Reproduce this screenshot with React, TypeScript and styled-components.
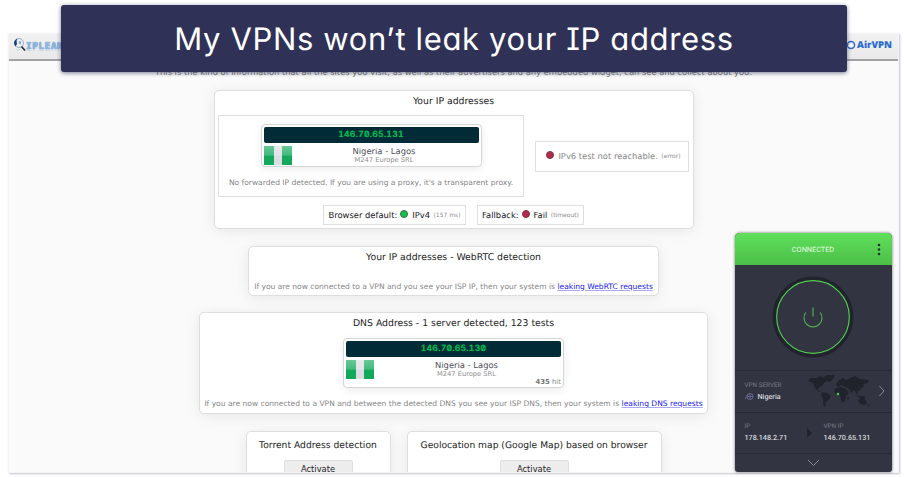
import React from 'react';
import styled, { createGlobalStyle, css } from 'styled-components';

const Global = createGlobalStyle`
  * { box-sizing: border-box; }
  body { margin: 0; background: #fff; text-rendering: geometricPrecision; }
`;

const Page = styled.div`
  position: relative;
  width: 908px;
  height: 477px;
  padding: 34px 0 0 9px;
  overflow: hidden;
  font-family: 'DejaVu Sans', Verdana, sans-serif;
  white-space: nowrap;
`;

const Browser = styled.main`
  width: 889px;
  height: 438px;
  overflow: hidden;
  background: #fafafa;
  box-shadow: 0 0 0 1px #f4f4f7, 1px 1px 2px 1px #c3c4d3;
`;

const SiteBar = styled.header`
  display: flex;
  justify-content: space-between;
  align-items: center;
  height: 27px;
  padding: 0 6px 4px 4px;
  background: linear-gradient(#f1f1f1, #e9e9e9);
  border-bottom: 2px solid #a2a2a2;
`;

const Brand = styled.div`
  display: flex;
  align-items: center;
  gap: 1px;
`;

const LeakName = styled.span`
  margin: 5px 0 0 -1px;
  font: bold 9.5px/12px 'DejaVu Sans Mono', monospace;
  letter-spacing: 0.5px;
  color: #8db8e3;
  text-shadow: 0 0 1px #4f7fb5, 0 2px 1px #c9d6e6;
`;

const AirName = styled.span`
  font: 800 9.5px/14px 'Open Sans', sans-serif;
  color: #2b6bce;
`;

const Intro = styled.p`
  height: 18px;
  margin: 0 0 11px;
  padding-top: 4px;
  font-size: 8.33px;
  line-height: 14px;
  text-align: center;
  color: #777;
`;

const Column = styled.section`
  display: flex;
  flex-direction: column;
  align-items: center;
  gap: 16.5px;
`;

const Card = styled.article<{ $w: number; $h: number; $top?: number }>`
  display: flex;
  flex-direction: column;
  align-items: center;
  flex: none;
  width: ${(p) => p.$w}px;
  height: ${(p) => p.$h}px;
  padding: ${(p) => p.$top ?? 3}px 3px 3px;
  background: #fff;
  border: 1px solid #dedede;
  border-radius: 5px;
  box-shadow: 0 2px 14px rgba(0, 0, 0, 0.08);
`;

const Title = styled.h2<{ $size?: number }>`
  margin: 0;
  font-size: ${(p) => p.$size ?? 9.3}px;
  line-height: 14px;
  font-weight: normal;
  color: #1d1d24;
`;

const Results = styled.div`
  display: flex;
  align-items: center;
  gap: 11px;
  margin-top: 6px;
`;

const Outlined = styled.div`
  display: flex;
  align-items: center;
  justify-content: center;
  border: 1px solid #dfdfdf;
  background: #fff;
`;

const Forwarded = styled(Outlined)`
  flex-direction: column;
  justify-content: flex-start;
  width: 306px;
  height: 82px;
  padding-top: 8px;
  gap: 10px;
`;

const Ipv6 = styled(Outlined)`
  width: 154px;
  height: 31px;
  color: #858585;
`;

const Protocols = styled.div`
  display: flex;
  gap: 11px;
  margin-top: 8px;
`;

const Protocol = styled(Outlined)<{ $w: number }>`
  width: ${(p) => p.$w}px;
  height: 20px;
  color: #15151c;
`;

const Label = styled.span`
  font-size: 8.37px;
  line-height: 12px;
`;

const Detail = styled.span`
  margin: 2px 0 0 3.5px;
  font-size: 6px;
  line-height: 10px;
  color: #8d8d8d;
`;

const Dot = styled.i<{ $ok?: boolean }>`
  width: 8px;
  height: 8px;
  margin: 0 4px 2px 3px;
  border-radius: 50%;
  border: 1px solid ${(p) => (p.$ok ? '#3a6a48' : '#7b3548')};
  background: ${(p) => (p.$ok ? '#12c24a' : '#b52a4c')};
`;

const AddressBox = styled.div<{ $h: number }>`
  flex: none;
  width: 221px;
  height: ${(p) => p.$h}px;
  padding: 2px;
  background: #fff;
  border: 1px solid #d6d6d6;
  border-radius: 4px;
  box-shadow: 0 2px 8px rgba(0, 0, 0, 0.08);
`;

const AddressBar = styled.div`
  height: 16px;
  border-radius: 2px;
  background: #012b36;
  color: #04bd50;
  text-align: center;
  font: 500 8.6px/17px Inter, sans-serif;
  font-feature-settings: 'zero', 'tnum';
  letter-spacing: 0.22px;
  text-shadow: 0 0 1px #04bd50;
`;

const Place = styled.div`
  display: grid;
  grid-template-columns: 28px 1fr;
  column-gap: 1px;
  padding: 3px 0 0;
`;

const Flag = styled.div`
  width: 28px;
  height: 19px;
  background: linear-gradient(rgba(255, 255, 255, 0.36), rgba(255, 255, 255, 0.2) 48%, transparent 54%),
    linear-gradient(90deg, #12a95c 34%, #dcdde2 34% 66%, #12a95c 66%);
`;

const PlaceText = styled.div`
  padding-right: 3px;
  text-align: center;
`;

const City = styled.div`
  font-size: 8.39px;
  line-height: 11px;
  color: #4e4e58;
`;

const Isp = styled.div`
  font-size: 6.7px;
  line-height: 7px;
  color: #8e8e8e;
`;

const Hits = styled.div`
  text-align: right;
  margin-top: -1px;
  font-size: 6.9px;
  line-height: 8px;
  color: #888;
  b { color: #777; }
`;

const Note = styled.p<{ $top?: number }>`
  margin: ${(p) => p.$top ?? 0}px 0 0;
  font-size: 7.56px;
  line-height: 12px;
  color: #858585;
`;

const DnsAddress = styled.div`
  margin-top: 7px;
`;

const Link = styled.a`
  color: #1616ee;
  text-decoration: underline;
  text-decoration-color: #a9a9f4;
  text-underline-offset: 1px;
`;

const Pair = styled.div`
  display: flex;
  gap: 16px;
`;

const Activate = styled.button`
  width: 69px;
  height: 18px;
  margin: 7px 0 0;
  padding: 0;
  border: 1px solid #dedede;
  border-radius: 2px;
  background: #ededed;
  color: #1d1d24;
  font: 8.3px/14px 'DejaVu Sans', sans-serif;
`;

const Banner = styled.h1`
  position: absolute;
  left: 61px;
  top: 5px;
  width: 786px;
  height: 67px;
  margin: 0;
  border-radius: 3px;
  background: #2f3156;
  box-shadow: 0 1px 4px rgba(47, 49, 86, 0.65);
  color: #fff;
  text-align: center;
  font: 400 31px/69px Inter, sans-serif;
  font-feature-settings: 'cv08', 'cv11';
  letter-spacing: 0.63px;
`;

const Vpn = styled.aside`
  position: absolute;
  left: 734.5px;
  top: 232.5px;
  width: 157px;
  height: 239.5px;
  display: flex;
  flex-direction: column;
  overflow: hidden;
  border-radius: 5px 5px 3px 3px;
  background: #323541;
  box-shadow: 0 0 3px rgba(0, 0, 0, 0.6);
  font-family: Roboto, sans-serif;
`;

const Status = styled.div`
  position: relative;
  height: 32px;
  background: linear-gradient(#5fe05b, #4cbe48);
  color: #e2fbe1;
  text-align: center;
  font-size: 7.3px;
  line-height: 34px;
`;

const More = styled.svg`
  position: absolute;
  right: 11px;
  top: 10px;
`;

const Power = styled.div`
  display: flex;
  justify-content: center;
  height: 105px;
  padding-top: 11px;
`;

const seam = css`border-top: 1px solid #272a34;`;

const ServerRow = styled.div`
  ${seam}
  display: grid;
  grid-template-columns: 62px 64px 1fr;
  align-items: center;
  height: 42px;
  padding: 0 6px 0 10px;
`;

const IpRow = styled.div`
  ${seam}
  display: grid;
  grid-template-columns: 61px 18px 1fr;
  align-items: center;
  height: 41px;
  padding-left: 10px;
`;

const Drawer = styled.div`
  ${seam}
  display: flex;
  flex: 1;
  align-items: center;
  justify-content: center;
`;

const Arrow = styled.svg`
  justify-self: end;
`;

const Caption = styled.div`
  font-size: 6.36px;
  line-height: 9px;
  color: #777a86;
`;

const Value = styled.div`
  display: flex;
  align-items: center;
  gap: 4px;
  margin-top: 2px;
  font-size: 7.2px;
  line-height: 10px;
  font-weight: 500;
  color: #d6d7dc;
`;

function Address({ ip, hits }: { ip: string; hits?: number }) {
  return (
    <AddressBox $h={hits ? 50 : 43}>
      <AddressBar>{ip}</AddressBar>
      <Place>
        <Flag />
        <PlaceText>
          <City>Nigeria - Lagos</City>
          <Isp>M247 Europe SRL</Isp>
        </PlaceText>
      </Place>
      {hits && <Hits><b>{hits}</b> hit</Hits>}
    </AddressBox>
  );
}

const Magnifier = () => (
  <svg width="13" height="15" viewBox="0 0 13 15">
    <circle cx="6" cy="6" r="4.500" fill="#e6eef6" stroke="#a3aebb" />
    <path d="M4.500 1.500C.8 3 .2 6.500 2.500 9.500L4 7 3.500 4Z" fill="#173d7d" />
    <path d="M6 4l2 .5 0 2-1.500 1Z" fill="#6ea4d5" />
    <path d="M8.500 9.500 12 13.500" stroke="#252a31" strokeWidth="1.700" />
    <path d="M3 12l2 1.500 3-2" stroke="#b4dcee" fill="none" />
  </svg>
);

const AirMark = () => (
  <svg width="10" height="10" viewBox="0 0 10 10">
    <circle cx="5" cy="5" r="3.500" fill="#eef2f8" stroke="#2b6bce" strokeWidth="1.600" />
    <path d="M2.500 6.500h5V4.800L6.200 3.500 4.600 4.300 2.500 5Z" fill="#fff" />
  </svg>
);

const PowerDial = () => (
  <svg width="82" height="82" viewBox="0 0 82 82" fill="none">
    <circle cx="41" cy="41" r="38" stroke="#21232d" strokeWidth="5" />
    <circle cx="41" cy="41" r="36.300" stroke="#55cf51" strokeWidth="1.200" />
    <path d="M33.800 36.500A9 9 0 1 0 48.200 36.500" stroke="#4dac4c" strokeWidth="1.200" />
    <path d="M41 31.500v9" stroke="#4dac4c" strokeWidth="1.200" />
  </svg>
);

const WorldMap = () => (
  <svg width="64" height="34" viewBox="0 0 64 34" fill="#20222c">
    <path d="M1 7 4 4 10 4 13 2 18 4 20 7 17 9 15 12 12 13 11 16 14 18 12 18 8 14 6 9Z" />
    <path d="M17 3 20 1 28 1 27 4 23 8 20 7Z" />
    <path d="M15 18 20 19 24 22 22 26 19 28 18 33 16 31 16 25 14 21Z" />
    <path d="M29 10 32 6 36 4 39 6 43 4 48 2 53 5 62 6 61 9 56 10 54 15 51 17 50 21 47 16 44 19 42 15 38 13 34 11 31 13Z" />
    <path d="M29 14 34 13 39 15 42 19 39 22 38 27 35 29 33 22 29 20 27 17Z" />
    <path d="M51 26 55 23 58 25 60 29 57 31 52 29ZM48 21 52 22 57 22 59 24 54 24ZM54 12 57 10 56 14ZM62 30 63 31 60 33ZM40 23 42 23 41 27Z" />
    <circle cx="31" cy="20" r="1.300" fill="#3dd04a" />
  </svg>
);

export default function App() {
  return (
    <Page>
      <Global />
      <Browser>
        <SiteBar>
          <Brand><Magnifier /><LeakName>IPLEAK</LeakName></Brand>
          <Brand><AirMark /><AirName>AirVPN</AirName></Brand>
        </SiteBar>
        <Intro>
          This is the kind of information that all the sites you visit, as well as their advertisers and any embedded
          widget, can see and collect about you.
        </Intro>
        <Column>
          <Card $w={480} $h={139} $top={4}>
            <Title>Your IP addresses</Title>
            <Results>
              <Forwarded>
                <Address ip="146.70.65.131" />
                <Note>No forwarded IP detected. If you are using a proxy, it's a transparent proxy.</Note>
              </Forwarded>
              <Ipv6>
                <Dot /><Label>IPv6 test not reachable.</Label><Detail>(error)</Detail>
              </Ipv6>
            </Results>
            <Protocols>
              <Protocol $w={143}>
                <Label>Browser default:</Label><Dot $ok /><Label>IPv4</Label><Detail>(157 ms)</Detail>
              </Protocol>
              <Protocol $w={107}>
                <Label>Fallback:</Label><Dot /><Label>Fail</Label><Detail>(timeout)</Detail>
              </Protocol>
            </Protocols>
          </Card>
          <Card $w={411} $h={50} $top={4}>
            <Title>Your IP addresses - WebRTC detection</Title>
            <Note $top={16}>
              If you are now connected to a VPN and you see your ISP IP, then your system is <Link>leaking WebRTC requests</Link>
            </Note>
          </Card>
          <Card $w={509} $h={102} $top={4}>
            <Title>DNS Address - 1 server detected, 123 tests</Title>
            <DnsAddress><Address ip="146.70.65.130" hits={435} /></DnsAddress>
            <Note $top={10}>
              If you are now connected to a VPN and between the detected DNS you see your ISP DNS, then your system is <Link>leaking DNS requests</Link>
            </Note>
          </Card>
          <Pair>
            <Card $w={145} $h={60} $top={7}>
              <Title $size={9.2}>Torrent Address detection</Title>
              <Activate>Activate</Activate>
            </Card>
            <Card $w={255} $h={60} $top={7}>
              <Title $size={9.16}>Geolocation map (Google Map) based on browser</Title>
              <Activate>Activate</Activate>
            </Card>
          </Pair>
        </Column>
      </Browser>
      <Banner>My VPNs won’t leak your IP address</Banner>
      <Vpn>
        <Status>
          CONNECTED
          <More width="4" height="13" viewBox="0 0 4 13" fill="#1d3b22">
            <circle cx="2" cy="2" r="1.300" /><circle cx="2" cy="6.500" r="1.300" /><circle cx="2" cy="11" r="1.300" />
          </More>
        </Status>
        <Power><PowerDial /></Power>
        <ServerRow>
          <div>
            <Caption>VPN SERVER</Caption>
            <Value>
              <svg width="9" height="9" viewBox="0 0 9 9" fill="none" stroke="#62668b" strokeWidth="1">
                <circle cx="5" cy="4.500" r="3" /><path d="M5 1.500v6M2 4.500h6M0 7.500 3 2" />
              </svg>
              Nigeria
            </Value>
          </div>
          <WorldMap />
          <Arrow width="8" height="12" viewBox="0 0 8 12" fill="none" stroke="#888b96">
            <path d="M1.500 1 6 6 1.500 11" />
          </Arrow>
        </ServerRow>
        <IpRow>
          <div><Caption>IP</Caption><Value>178.148.2.71</Value></div>
          <svg width="7" height="12" viewBox="0 0 7 12"><path d="M1 1 6 6 1 11Z" fill="#20222c" /></svg>
          <div><Caption>VPN IP</Caption><Value>146.70.65.131</Value></div>
        </IpRow>
        <Drawer>
          <svg width="13" height="8" viewBox="0 0 13 8" fill="none" stroke="#888b96"><path d="M1 1 6.500 6.500 12 1" /></svg>
        </Drawer>
      </Vpn>
    </Page>
  );
}
